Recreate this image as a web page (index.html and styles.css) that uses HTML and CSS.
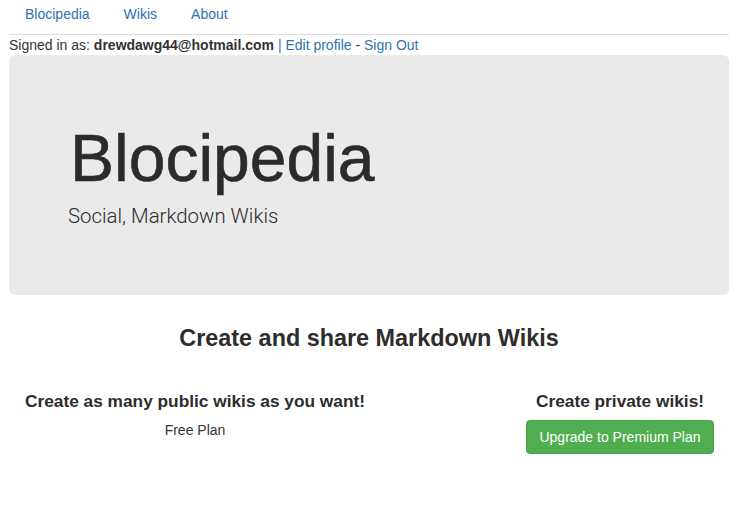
FILE: index.html
```html
<!DOCTYPE html>
<html lang="en">
<head>
<meta charset="utf-8">
<title>Blocipedia</title>
<link rel="stylesheet" href="styles.css">
</head>
<body>
<div class="page">
  <nav class="nav">
    <a href="#" class="nav-link">Blocipedia</a>
    <a href="#" class="nav-link">Wikis</a>
    <a href="#" class="nav-link">About</a>
  </nav>
  <div class="user-line">Signed in as: <strong>drewdawg44@hotmail.com</strong> <a href="#">| Edit profile</a> - <a href="#">Sign Out</a></div>
  <section class="jumbotron">
    <h1 class="jumbo-title">Blocipedia</h1>
    <p class="jumbo-sub">Social, Markdown Wikis</p>
  </section>
  <h2 class="section-title">Create and share Markdown Wikis</h2>
  <div class="plans">
    <div class="plan plan-free">
      <h3 class="plan-title">Create as many public wikis as you want!</h3>
      <p class="plan-label">Free Plan</p>
    </div>
    <div class="plan plan-premium">
      <h3 class="plan-title">Create private wikis!</h3>
      <a href="#" class="btn-success">Upgrade to Premium Plan</a>
    </div>
  </div>
</div>
</body>
</html>
```
FILE: styles.css
```css
* { box-sizing: border-box; }
html, body { margin: 0; padding: 0; background: #fff; }
body {
  font-family: "Liberation Sans", Arial, Helvetica, sans-serif;
  font-size: 14px;
  line-height: 20px;
  color: #333;
}
a { color: #2f72b3; text-decoration: none; }
.page { width: 720px; margin-left: 9px; }

.nav {
  display: flex;
  gap: 4px;
  padding-left: 1px;
  height: 35px;
  border-bottom: 1px solid #ddd;
}
.nav-link {
  display: block;
  padding: 4px 15px 10px;
  line-height: 20px;
}

.user-line { line-height: 20px; height: 20px; }
.user-line strong { font-weight: bold; }

.jumbotron {
  height: 240px;
  background: #eaeaea;
  border-radius: 6px;
  padding: 67px 59px 0;
}
.jumbo-title {
  margin: 0 0 0 2px;
  font-size: 66px;
  line-height: 72px;
  font-weight: normal;
  color: #2b2b2b;
  -webkit-text-stroke: 0.6px #2b2b2b;
}
.jumbo-sub {
  margin: 7px 0 0;
  font-family: Roboto, "Liberation Sans", sans-serif;
  font-weight: 300;
  font-size: 20.4px;
  line-height: 30px;
  color: #2b2b2b;
}

.section-title {
  margin: 28px 0 0;
  text-align: center;
  font-size: 23.4px;
  line-height: 30px;
  font-weight: bold;
  color: #2d2d2d;
}

.plans {
  display: grid;
  grid-template-columns: 372px 1fr 218px;
  margin-top: 36px;
}
.plan { text-align: center; }
.plan-premium { grid-column: 3; }
.plan-title {
  margin: 0;
  font-size: 17.3px;
  line-height: 24px;
  font-weight: bold;
  color: #2d2d2d;
}
.plan-label { margin: 7px 0 0; line-height: 20px; color: #333; }
.btn-success {
  display: inline-block;
  margin-top: 7px;
  padding: 6px 12px;
  line-height: 20px;
  font-size: 14px;
  color: #fff;
  background: #50ae50;
  border: 1px solid #48a648;
  border-radius: 4px;
}
```
